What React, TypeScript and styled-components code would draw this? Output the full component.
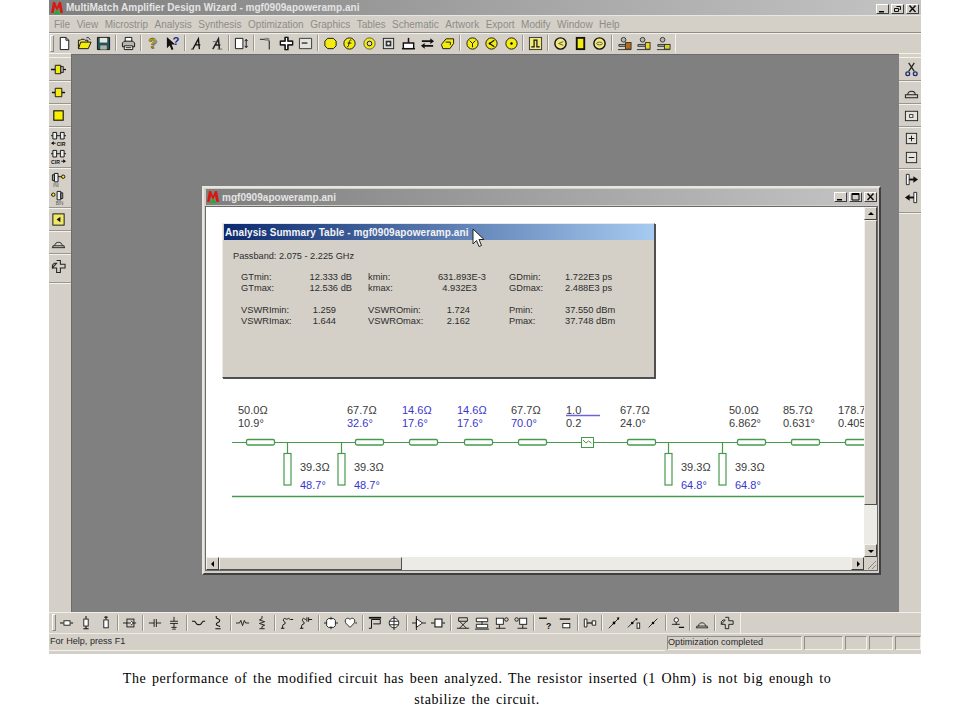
import React from "react";
import styled, { createGlobalStyle } from "styled-components";

const Global = createGlobalStyle`
  html, body { margin: 0; padding: 0; background: #fff; }
  #root { width: 960px; }
`;
const FACE = "#d4d0c8";
const SANS = `"Liberation Sans", Arial, sans-serif`;

const Page = styled.div`width: 960px; height: 720px; overflow: hidden; background: #fff;`;
const AppFrame = styled.div`width: 872px; margin-left: 49px; height: 654px; display: flex; flex-direction: column; background: ${FACE}; font-family: ${SANS};`;
const TitleBar = styled.div<{ $small?: boolean }>`
  display: flex; align-items: center; flex: none;
  height: ${(p) => (p.$small ? 16 : 15)}px;
  background: linear-gradient(90deg, #7f7f7f, #c4c4c4);
  color: #e4e4e4; font-weight: bold; font-size: 10px; letter-spacing: 0.03px;
  padding: 0 ${(p) => (p.$small ? 0 : 2)}px 0 ${(p) => (p.$small ? 0 : 1)}px;
`;
const TitleText = styled.span`flex: 1; margin-left: 2px; white-space: nowrap;`;
const CaptionButtons = styled.div<{ $drop?: boolean }>`display: flex; gap: 2px; margin-top: ${(p) => (p.$drop ? 2 : 0)}px;`;
const CaptionButton = styled.div`
  width: 13px; height: 10px; background: ${FACE}; box-sizing: border-box;
  border: 1px solid; border-color: #fff #404040 #404040 #fff;
  display: flex; align-items: center; justify-content: center;
`;
const MenuBar = styled.div`
  height: 18px; flex: none; display: flex; align-items: center; gap: 6.5px; padding: 1px 0 0 5px; font-size: 10px; color: #8e8c86;
  border-bottom: 1px solid #8f8d88; box-sizing: border-box; box-shadow: inset 0 1px 0 #e8e6e0;
`;
const Toolbar = styled.div<{ $pad: number; $height: number; $end: number }>`
  height: ${(p) => p.$height}px; flex: none; display: flex; align-items: center; padding-left: ${(p) => p.$pad}px; box-sizing: border-box;
  position: relative;
  box-shadow: inset 0 1px 0 #f2f0ea;
  &::after { content: ""; display: block; width: 1px; height: 100%; background: #f2f0ea; margin-left: ${(p) => p.$end}px; }
`;
const Grip = styled.div`width: 2px; height: 15px; border: 1px solid; border-color: #fff #8a8880 #8a8880 #fff; margin-left: -4px; margin-right: 1px;`;
const Btn = styled.div`width: 19.5px; height: 16px; flex: none; display: flex; align-items: center; justify-content: center;`;
const Sep = styled.div<{ $w: number }>`
  width: ${(p) => p.$w}px; height: 16px; flex: none; position: relative;
  &::before { content: ""; position: absolute; left: calc(50% - 1px); top: 0; bottom: 0; width: 1px; background: #98968f; box-shadow: 1px 0 0 #f4f2ec; }
`;
const Middle = styled.div`flex: none; height: 559px; display: flex;`;
const SideBar = styled.div<{ $w: number }>`
  width: ${(p) => p.$w}px; flex: none; display: flex; flex-direction: column; align-items: center; box-sizing: border-box;
`;
const SideGrip = styled.div`width: 100%; height: 3px; flex: none; border-top: 1px solid #f4f2ec; border-bottom: 1px solid #f4f2ec; margin-bottom: 1px;`;
const SideBtn = styled.div<{ $h: number; $nudge: number }>`height: ${(p) => p.$h}px; flex: none; display: flex; align-items: center; justify-content: center; margin-left: ${(p) => p.$nudge}px;`;
const SideSep = styled.div<{ $h: number }>`
  height: ${(p) => p.$h}px; width: 100%; flex: none; display: flex; align-items: center;
  &::before { content: ""; display: block; width: 100%; height: 1px; background: #98968f; box-shadow: 0 1px 0 #f4f2ec; }
`;
const Mdi = styled.div`flex: 1; position: relative; background: #808080; margin-top: 1px; box-shadow: inset 1px 1px 0 #6c6c6c;`;
const ChildWindow = styled.div`
  position: absolute; left: 131px; top: 132px; width: 679px; height: 389px; box-sizing: border-box;
  background: ${FACE}; border: 2px solid; border-color: #e8e6e0 #404040 #404040 #e8e6e0; padding: 1px 2px 2px 2px;
  display: flex; flex-direction: column;
`;
const ClientGrid = styled.div`
  margin-top: 2px; display: grid; grid-template-columns: 658px 13px; grid-template-rows: 350px 13px; background: ${FACE};
  box-shadow: 0 0 0 1px #6a6a6a;
`;
const Client = styled.div`position: relative; background: #fff; overflow: hidden;`;
const Scroll = styled.div<{ $vertical?: boolean }>`display: flex; flex-direction: ${(p) => (p.$vertical ? "column" : "row")}; background: #ecebe6;`;
const ScrollButton = styled.div`
  width: 13px; height: 13px; flex: none; background: ${FACE}; box-sizing: border-box; border: 1px solid; border-color: #f4f2ec #404040 #404040 #f4f2ec;
  display: flex; align-items: center; justify-content: center;
`;
const Thumb = styled.div<{ $size: number; $vertical?: boolean }>`
  flex: none; background: ${FACE}; box-sizing: border-box; border: 1px solid; border-color: #f4f2ec #505050 #505050 #f4f2ec;
  ${(p) => (p.$vertical ? `height: ${p.$size}px;` : `width: ${p.$size}px;`)}
`;
const Track = styled.div`flex: 1;`;
const Corner = styled.div`background: ${FACE}; display: flex; align-items: flex-end; justify-content: flex-end;`;

const Dialog = styled.div`
  position: absolute; left: 16px; top: 16px; width: 433px; height: 155px; box-sizing: border-box;
  background: ${FACE}; border: 1px solid; border-color: #ece9e4 #505050 #505050 #ece9e4; box-shadow: 1px 1px 0 #505050;
  color: #2c2c2c; font-size: 9px;
`;
const DialogTitle = styled.div`
  height: 16px; margin-left: 1px; display: flex; align-items: center; padding-left: 1px;
  background: linear-gradient(90deg, #0c2a70, #a6caf0); color: #f4f4f4; font-size: 10px; font-weight: bold; letter-spacing: 0.08px; white-space: nowrap;
`;
const Passband = styled.div`margin: 11px 0 0 10px; font-size: 9.2px; line-height: 11px;`;
const Table = styled.div`
  margin: 10px 0 0 18px; display: grid; font-size: 9.3px; line-height: 11px;
  grid-template-columns: 59px 52px 16px 62px 56px 23px 56px 47px;
  grid-auto-rows: 11px; white-space: nowrap;
`;
const Spacer = styled.div`grid-column: 1 / -1; height: 11px;`;
const Cell = styled.div``;
const Gap = styled.div``;
const Value = styled.div<{ $pad: number }>`text-align: right; padding-right: ${(p) => p.$pad}px;`;
const PointerMark = styled.svg`position: absolute; left: 266px; top: 21px;`;

const Schematic = styled.svg`display: block; position: absolute; left: 0; top: 0; font-family: ${SANS}; font-size: 11px;`;

const StatusBar = styled.div`
  height: 21px; flex: none; display: flex; align-items: flex-start; box-sizing: border-box; border-top: 1px solid #eeece6; padding-top: 2px; font-size: 9.1px; color: #2a2a2a;
`;
const StatusMain = styled.div`flex: 1; padding: 0 0 0 1px; height: 14px; border-bottom: 1px solid #f4f2ec;`;
const StatusPanel = styled.div<{ $w: number }>`
  width: ${(p) => p.$w}px; height: 14px; flex: none; margin-left: 2px; box-sizing: border-box; white-space: nowrap;
  border: 1px solid; border-color: #8f8d88 #f4f2ec #f4f2ec #8f8d88;
`;
const Caption = styled.p`
  width: 760px; margin: 14px 0 0 97px; font-family: "Liberation Serif", "Times New Roman", serif; font-size: 14px; line-height: 21px; text-align: center; letter-spacing: 0.56px; word-spacing: 1.66px; color: #000;
`;
const Glyph = styled.svg`display: block; overflow: visible;`;

const Y = "#f4ec10", K = "#111", G = "#8a8a80", W = "#fff";
const S = ({ d, c = K, w = 1 }: { d: string; c?: string; w?: number }) => <path d={d} fill="none" stroke={c} strokeWidth={w} />;
const F = ({ d, f = W, c = K }: { d: string; f?: string; c?: string }) => <path d={d} fill={f} stroke={c} />;
const Ic = ({ size = 16, children }: { size?: number; children: React.ReactNode }) => <Glyph width={size} height={size} viewBox="0 0 16 16">{children}</Glyph>;

const ICONS: Record<string, React.ReactNode> = {
  new: <><F d="M3.5 1.5h6l3 3v10h-9z" /><S d="M9.5 1.5v3h3" /></>,
  open: <><F d="M1.5 13.5v-9h2l1-1h3l1 1h3v2" f="#e8d870" /><F d="M1.5 13.5l2.5-7h11l-3 7z" f={Y} /><S d="M10 2c2-1 3 0 4 2" /></>,
  save: <><F d="M1.5 1.5h13v13h-13z" f="#23555a" /><rect x="4" y="2" width="8" height="5" fill="#e8e8e0" /><rect x="4.5" y="10" width="7" height="4.5" fill="#b0b0a8" /></>,
  print: <><F d="M4.5 1.5h7v5h-7z" /><F d="M1.5 7.5l2-2h9l2 2v4h-13z" f="#b8b6ae" /><F d="M3.5 10.5h9v4h-9z" /><S d="M5 12.5h6" /></>,
  help: <><text x="3.5" y="13.5" fontFamily={SANS} fontWeight="bold" fontSize="15" fill="#8a8a80">?</text><text x="2.5" y="12.5" fontFamily={SANS} fontWeight="bold" fontSize="15" fill="#c0b010" stroke={K} strokeWidth=".3">?</text></>,
  what: <><path d="M2 1v12l3-3 2 5 2-1-2-5h4z" fill={K} /><text x="8" y="9.5" fontFamily={SANS} fontWeight="bold" fontSize="12" fill="#1a2a90">?</text></>,
  a1: <><S d="M3 14L9 3l1 11M5.5 9.500h5.500" w={1.4} /><S d="M1 14h3" c="#444" /></>,
  a2: <><S d="M3 14L9 3l1 11M5.5 9.500h5.500" w={1.6} c="#222" /><S d="M8 14h5M3 6h4" c="#666" /></>,
  boxar: <><F d="M1.5 2.5h8v11h-8z" /><S d="M13 4v8M11.5 5.5L13 3.5l1.5 2M11.5 10.5l1.5 2 1.5-2" /></>,
  tee: <><S d="M1 3.5h8l2 2v9" c="#444" w={1.4} /><path d="M6 2h5v3H6z" fill={G} /></>,
  cross: <><F d="M6.5 1.5h3v4h5v4h-5v5h-3v-5h-5v-4h5z" f={W} /><S d="M6.5 1.5h3v4h5v4h-5v5h-3v-5h-5v-4h5z" w={1.4} /></>,
  rectb: <><F d="M1.5 2.5h13v11h-13z" f="#e4e2dc" c="#333" /><S d="M4 7.5h6" c="#333" w={1.5} /></>,
  oct: <path d="M5 2.5h6l3 3v5l-3 3H5l-3-3v-5z" fill={Y} stroke={K} />,
  circf: <><circle cx="8" cy="8" r="6" fill={Y} stroke={K} /><S d="M10 4.5c-2-1-2 1-2.5 3S7 12 5.5 11.5M6 7.5h4" /></>,
  ring: <><circle cx="8" cy="8" r="6" fill={Y} stroke="#555" /><circle cx="8" cy="8" r="2.5" fill="#e0d8a0" stroke={K} /></>,
  dots: <><rect x="2.5" y="2.5" width="11" height="11" fill="#ddd" stroke="#222" /><rect x="5" y="5" width="6" height="6" fill="#333" /><circle cx="8" cy="8" r="1.4" fill={W} /></>,
  capb: <><S d="M8 2v5" w={1.6} /><path d="M2.5 7.5h11v6h-11z" fill={W} stroke={K} strokeWidth="1.5" /><S d="M1 13.5h14" w={1.5} /></>,
  swap: <><S d="M2 5.5h11M3 10.5h11" w={2} /><path d="M11 2.5l4 3-4 3zM5 7.5l-4 3 4 3z" fill={K} /></>,
  blob: <><path d="M1.5 9l5-6h8v5l-4 5.5H3z" fill={Y} stroke={K} /><S d="M6 6.5h5v3" /></>,
  cy: <><circle cx="8" cy="8" r="6" fill={Y} stroke={K} /><S d="M5 5l3 3 3-3M8 8v4" /></>,
  cl: <><circle cx="8" cy="8" r="6" fill={Y} stroke={K} /><S d="M11 4.5L6 8l5 3.5" w={1.3} /><circle cx="6" cy="8" r="1" /></>,
  cd: <><circle cx="8" cy="8" r="6" fill={Y} stroke={K} /><circle cx="8" cy="8" r="1.3" /></>,
  pulse: <><rect x="1.5" y="1.5" width="13" height="13" fill="#f0e878" stroke="#333" /><S d="M3.5 11.5h3v-7h3v7h3" w={1.3} /></>,
  co: <><circle cx="8" cy="8" r="6" fill="#f0e878" stroke={K} strokeWidth="1.5" /><S d="M11 6L6 8l5 2" c="#555" /></>,
  sq: <rect x="4" y="2" width="8" height="12" fill={Y} stroke={K} strokeWidth="2" />,
  ov: <><circle cx="8" cy="8" r="6" fill="#f0e878" stroke={K} strokeWidth="1.5" /><ellipse cx="8" cy="8" rx="3" ry="1.5" fill="none" stroke="#555" /></>,
  lock1: <><circle cx="7" cy="4" r="2.5" fill="#b8b6ae" stroke="#333" /><path d="M2 9h9v2H2zM1 14.5h14" fill="#a8a89c" stroke="#333" /><rect x="9" y="7" width="6" height="7" fill="#b86a18" stroke="#333" /></>,
  lock2: <><circle cx="7" cy="4" r="2.5" fill="#b8b6ae" stroke="#333" /><path d="M2 9h9v2H2zM1 14.5h14" fill="#a8a89c" stroke="#333" /><rect x="10" y="7" width="5" height="7" fill="#e8d820" stroke="#333" /></>,
  lock3: <><circle cx="7" cy="4" r="2.5" fill="#b8b6ae" stroke="#333" /><path d="M2 9h9v2H2zM1 14.5h14" fill="#a8a89c" stroke="#333" /><rect x="9" y="9" width="6" height="5" fill="#d8d020" stroke="#333" /></>,

  l1: <><S d="M0 8h5" w={1.6} /><path d="M4.5 3.5h6v9h-6z" fill={Y} stroke={K} /><rect x="10.5" y="5" width="2.5" height="6" fill="#d8d8c8" stroke={K} /><S d="M13 8h3" w={1.4} /></>,
  l2: <><S d="M1 8h3.5M11.5 8h3.5" w={1.6} /><path d="M4.5 3.5h7v9h-7z" fill={Y} stroke={K} /></>,
  l3: <rect x="3" y="3" width="10" height="10" fill="#f8f000" stroke={K} strokeWidth="1.2" />,
  cir1: <><path d="M2 1.5h4v7H2zM10 1.5h4v7h-4z" fill="#eee" stroke={K} /><S d="M6 5h4M0 5h2M14 5h2" /><path d="M0 13l3-2v4z" /><S d="M3 13h2" /><text x="6" y="15.5" fontFamily={SANS} fontWeight="bold" fontSize="5.5" fill={K}>CIR</text></>,
  cir2: <><path d="M2 1.5h4v7H2zM10 1.5h4v7h-4z" fill="#eee" stroke={K} /><S d="M6 5h4M0 5h2M14 5h2" /><path d="M16 13l-3-2v4z" /><S d="M13 13h-2" /><text x="0" y="15.5" fontFamily={SANS} fontWeight="bold" fontSize="5.5" fill={K}>CIR</text></>,
  in1: <><path d="M3.5 1.5h4v9h-4zM1.5 3h2v6h-2z" fill="#eee" stroke={K} /><S d="M7.5 5h4" /><circle cx="13" cy="5" r="1.8" fill={Y} stroke={K} /><text x="2" y="15.5" fontFamily={SANS} fontSize="5" fill="#555">INI</text></>,
  in2: <><S d="M0 5h3" /><circle cx="2.5" cy="5" r="1.8" fill={Y} stroke={K} /><path d="M6.5 1.5h4v9h-4zM10.5 3h2v6h-2z" fill="#eee" stroke={K} /><text x="5" y="15.5" fontFamily={SANS} fontSize="5" fill="#555">BIN</text></>,
  boxs: <><rect x="2" y="2" width="12" height="12" fill="#f0e868" stroke={K} /><path d="M6 8l4-3v6z" fill={K} /></>,
  hat: <><S d="M1 13.5h14M2 13.5v-2h12v2M4 11.5c0-5 8-5 8 0" c="#222" /></>,
  plus2: <><S d="M6 1.5h4v4h5v4h-5v5H6v-5H1.5M1.5 9.5v-3l2-2H6z" c="#222" w={1.1} /></>,

  scis: <><S d="M5 1l6 9M11 1l-6 9" c="#222" w={1.3} /><circle cx="4" cy="12.5" r="2" fill="none" stroke="#1a2a70" strokeWidth="1.4" /><circle cx="12" cy="12.5" r="2" fill="none" stroke="#1a2a70" strokeWidth="1.4" /></>,
  hat2: <><S d="M1 13.5h14M1.5 13.5v-3h13v3M4 10.5c0-5 8-5 8 0" c="#222" w={1.1} /></>,
  boxdot: <><rect x="1.5" y="3.5" width="13" height="10" fill="#e4e2dc" stroke="#222" /><rect x="6" y="7" width="3.5" height="3" fill={W} stroke="#333" /></>,
  plusb: <><rect x="2.5" y="2.5" width="11" height="11" fill="#e4e2dc" stroke="#222" /><S d="M5 8h6M8 5v6" /></>,
  minusb: <><rect x="2.5" y="2.5" width="11" height="11" fill="#e4e2dc" stroke="#222" /><S d="M5 8h6" /></>,
  barR: <><path d="M2.5 2.5h3v11h-3z" fill={W} stroke="#222" /><S d="M5.5 8H12" w={2} /><path d="M10 4.5l5 3.5-5 3.5z" fill={K} /></>,
  barL: <><path d="M10.5 2.5h3v11h-3z" fill={W} stroke="#222" /><S d="M10.5 8H4" w={2} /><path d="M6 4.5L1 8l5 3.5z" fill={K} /></>,

  b1: <><S d="M0 8h4M12 8h3" w={1.4} /><rect x="4.5" y="5.5" width="7" height="5" fill={W} stroke={K} /></>,
  b2: <><S d="M8 0v3M8 11v3M5 14.5h6" w={1.2} /><rect x="5.5" y="3.5" width="5" height="8" fill={W} stroke={K} /></>,
  b3: <><S d="M8 0v4M6 1.5h4" w={1.2} /><rect x="5.5" y="4.5" width="5" height="9" fill={W} stroke={K} /></>,
  b4: <><rect x="4.5" y="3.5" width="8" height="9" fill="none" stroke={K} /><S d="M0 8h15" /><path d="M9 5.5l3 2.5-3 2.5" fill={W} stroke={K} /></>,
  b5: <S d="M1 8h6M7 3.5v9M9.5 3.5v9M9.5 8H15" />,
  b6: <S d="M8 1v5M3.5 6h9M3.5 8.5h9M8 8.5V13M5 13h6M6 15h4" />,
  b7: <S d="M0 6h3c1 0 1 4 5 4s3-4 5-4h2" w={1.2} />,
  b8: <S d="M6 0v2c0 1 4 1 4 3.5S6 7 6 9.5s4 1 4 3M5 14.5h6" w={1.2} />,
  b9: <S d="M0 8h4l1.5-3 2 6 2-6 1.5 3h4" />,
  b10: <S d="M8 0v3L5 4.5l6 2-6 2 6 2-3 1.5v2M5 14.5h6" />,
  b11: <S d="M1 14h4M3 14v-3c0-2 3-1 3-3s-3-1-2-4 3 1 5-1c1-1 2 1 3 1h3" w={1.1} />,
  b12: <S d="M1 14h4M3 14v-3c0-2 3-1 3-3s-3-1-2-4 2 0 4 0M9 1.5v5M11 1.5v5M11 4h4" w={1.1} />,
  b13: <><path d="M5 3h6l2 2v6l-2 2H5l-2-2V5z" fill={W} stroke={K} /><S d="M0 8h3M13 8h3M8 1v3M8 12v3" /></>,
  b14: <><path d="M4 3c2-1 3 0 4 1 1-1 2-2 4-1s2 4 0 6l-4 4-4-4C2 7 2 4 4 3z" fill={W} stroke={K} /><S d="M14 8h2" /></>,
  b15: <><S d="M1 2h14" w={2} /><S d="M4 14V4h10v5H6M4 14H1" w={1.1} /></>,
  b16: <><circle cx="8" cy="8" r="5.5" fill={W} stroke={K} /><S d="M3 6h10M3 10h10M8 0v16" /></>,
  b17: <><path d="M5 3l7 5-7 5z" fill={W} stroke={K} /><S d="M0 8h5M12 8h4M5 0v16" /></>,
  b18: <><rect x="4.5" y="3.5" width="8" height="9" fill={W} stroke={K} strokeWidth="1.2" /><S d="M0 8h4M13 8h3" w={1.4} /></>,
  b19: <><path d="M3 2h10v4H3zM1 14h14M4 6l8 8M12 6l-8 8" fill="none" stroke={K} /></>,
  b20: <><path d="M1.5 2.5h13v4h-13zM1.5 9.5h13v4h-13z" fill={W} stroke={K} /><S d="M8 6v4M0 15h16" /></>,
  b21: <><rect x="1.5" y="2.5" width="8" height="7" fill={W} stroke={K} /><circle cx="13" cy="4" r="2" fill="none" stroke={K} /><S d="M1 14h11M5 10v4" /></>,
  b22: <><circle cx="3" cy="4" r="2" fill="none" stroke={K} /><rect x="6.5" y="2.5" width="8" height="7" fill={W} stroke={K} /><S d="M4 14h11M10 10v4" /></>,
  b23: <><S d="M0 2.5h9" w={1.6} /><text x="8" y="14.5" fontFamily={SANS} fontWeight="bold" fontSize="10" fill={K}>?</text></>,
  b24: <><S d="M2 3.5h12" w={1.6} /><rect x="5.5" y="8.5" width="8" height="5" fill={W} stroke={K} /></>,
  b25: <><path d="M1.5 3.5h3v9h-3zM10.5 5.5h4v5h-4z" fill={W} stroke={K} /><S d="M4.5 8h6" w={1.4} /></>,
  b26: <><S d="M2 14L13 3" /><circle cx="8" cy="8" r="1.6" /><path d="M11 2l3-.5-.5 3z" /></>,
  b27: <><S d="M1 13L10 4" /><circle cx="6" cy="8" r="1.5" /><path d="M9 3l3-.5-.5 3z" /><rect x="11.5" y="8" width="3" height="6" fill={W} stroke={K} /></>,
  b28: <><S d="M3 13L13 3" /><circle cx="8" cy="8" r="1.5" /></>,
  b29: <><circle cx="6" cy="4.5" r="2.5" fill={W} stroke={K} /><S d="M1 9.5h9" /><S d="M9 13h6" w={1.5} /><S d="M6 7v3" /></>,
};

const TOP = [["new", "open", "save"], ["print"], ["help", "what"], ["a1", "a2"], ["boxar"], ["tee", "cross", "rectb"], ["oct", "circf", "ring", "dots", "capb", "swap", "blob"], ["cy", "cl", "cd"], ["pulse"], ["co", "sq", "ov"], ["lock1", "lock2", "lock3"]];
const BOTTOM = [["b1", "b2", "b3"], ["b4"], ["b5", "b6"], ["b7", "b8"], ["b9", "b10"], ["b11", "b12"], ["b13", "b14"], ["b15", "b16"], ["b17", "b18"], ["b19", "b20", "b21", "b22"], ["b23", "b24"], ["b25"], ["b26", "b27", "b28"], ["b29"], ["hat"], ["plus2"]];
type SideItem = { i?: string; h: number };
const LEFT: SideItem[] = [{ i: "l1", h: 20 }, { h: 3 }, { i: "l2", h: 20 }, { h: 3 }, { i: "l3", h: 20 }, { h: 3 }, { i: "cir1", h: 20 }, { i: "cir2", h: 17 }, { h: 5 }, { i: "in1", h: 18 }, { i: "in2", h: 18 }, { h: 3 }, { i: "boxs", h: 20 }, { h: 3 }, { i: "hat", h: 20 }, { h: 3 }, { i: "plus2", h: 22 }, { h: 10 }];
const RIGHT: SideItem[] = [{ i: "scis", h: 20 }, { h: 3 }, { i: "hat2", h: 20 }, { h: 3 }, { i: "boxdot", h: 20 }, { h: 3 }, { i: "plusb", h: 20 }, { i: "minusb", h: 18 }, { h: 4 }, { i: "barR", h: 18 }, { i: "barL", h: 18 }, { h: 12 }];

const MENUS = ["File", "View", "Microstrip", "Analysis", "Synthesis", "Optimization", "Graphics", "Tables", "Schematic", "Artwork", "Export", "Modify", "Window", "Help"];

const Logo = () => (
  <Glyph width="14" height="14" viewBox="0 0 14 14">
    <path d="M1 12L3 1h2l2 5 2-5h2l2 11h-2.5L9 6l-2 4-2-4-1.500 6z" fill="#d81810" />
    <path d="M3 13l4-4 4 4z" fill="#20b030" />
  </Glyph>
);

const CapGlyph = ({ kind }: { kind: string }) => (
  <Glyph width="9" height="8" viewBox="0 0 9 8">
    {kind === "min" && <path d="M1 6h5v1.500H1z" fill="#000" />}
    {kind === "res" && <S d="M3.500 1.500h4v3h-1M1.500 3.500h4v3h-4z" />}
    {kind === "max" && <path d="M1 .5h7v6.500H1zM1 1.500h7" fill="none" stroke="#000" />}
    {kind === "x" && <S d="M1.500 .5l6 6.500M7.500 .5l-6 6.500" w={1.5} />}
  </Glyph>
);
const Tri = ({ dir }: { dir: "u" | "d" | "l" | "r" }) => {
  const d = { u: "M1 5l3-3 3 3z", d: "M1 3l3 3 3-3z", l: "M5 1L2 4l3 3z", r: "M3 1l3 3-3 3z" }[dir];
  return <Glyph width="8" height="8" viewBox="0 0 8 8"><path d={d} fill="#000" /></Glyph>;
};

const GREEN = "#469a4e", BLUE = "#3a36cc", INK = "#3a3a3a";
const Pair = ({ x, a, b, ca = INK, cb = INK }: { x: number; a: string; b: string; ca?: string; cb?: string }) => (
  <>
    <text x={x} y={414} fill={ca}>{a}</text>
    <text x={x} y={427} fill={cb}>{b}</text>
  </>
);
const Series = ({ x }: { x: number }) => <rect x={x + 0.5} y={439.5} width={28} height={5.500} rx={1.500} fill="#fff" stroke={GREEN} strokeWidth="1.300" />;
const Shunt = ({ x, z, deg }: { x: number; z: string; deg: string }) => (
  <>
    <path d={`M${x + 0.5} 442v11`} stroke={GREEN} strokeWidth="1.200" />
    <rect x={x - 3} y={453.500} width={7} height={31.500} fill="#fff" stroke={GREEN} strokeWidth="1.200" />
    <text x={x + 13} y={471} fill={INK}>{z}</text>
    <text x={x + 13} y={489} fill={BLUE}>{deg}</text>
  </>
);

export default function App() {
  const rows: [string, string, number, string, string, number, string, string, number][] = [
    ["GTmin:", "12.333 dB", 0, "kmin:", "631.893E-3", 0, "GDmin:", "1.722E3 ps", 0],
    ["GTmax:", "12.536 dB", 0, "kmax:", "4.932E3", 9, "GDmax:", "2.488E3 ps", 0],
    ["VSWRImin:", "1.259", 16, "VSWROmin:", "1.724", 16, "Pmin:", "37.550 dBm", 0],
    ["VSWRImax:", "1.644", 16, "VSWROmax:", "2.162", 16, "Pmax:", "37.748 dBm", 0],
  ];
  const renderRow = (r: (typeof rows)[number]) => (
    <React.Fragment key={r[0]}>
      <Cell>{r[0]}</Cell><Value $pad={r[2]}>{r[1]}</Value><Gap />
      <Cell>{r[3]}</Cell><Value $pad={r[5]}>{r[4]}</Value><Gap />
      <Cell>{r[6]}</Cell><Value $pad={r[8]}>{r[7]}</Value>
    </React.Fragment>
  );
  const bar = (groups: string[][], sep: number, size: number) =>
    groups.map((g, gi) => (
      <React.Fragment key={gi}>
        {gi > 0 && <Sep $w={sep} />}
        {g.map((n) => <Btn key={n}><Ic size={size}>{ICONS[n]}</Ic></Btn>)}
      </React.Fragment>
    ));
  const side = (items: SideItem[], nudge: number) =>
    items.map((it, idx) => it.i
      ? <SideBtn key={idx} $h={it.h} $nudge={nudge}><Ic size={15}>{ICONS[it.i]}</Ic></SideBtn>
      : <SideSep key={idx} $h={it.h} />);

  return (
    <Page>
      <Global />
      <AppFrame>
        <TitleBar>
          <Logo />
          <TitleText>MultiMatch Amplifier Design Wizard - mgf0909apoweramp.ani</TitleText>
          <CaptionButtons $drop>
            <CaptionButton><CapGlyph kind="min" /></CaptionButton>
            <CaptionButton><CapGlyph kind="res" /></CaptionButton>
            <CaptionButton><CapGlyph kind="x" /></CaptionButton>
          </CaptionButtons>
        </TitleBar>
        <MenuBar>{MENUS.map((m) => <span key={m}>{m}</span>)}</MenuBar>
        <Toolbar $pad={5} $height={20} $end={2}><Grip />{bar(TOP, 5.25, 15)}</Toolbar>
        <Middle>
          <SideBar $w={22}><SideGrip />{side(LEFT, -3)}</SideBar>
          <Mdi>
            <ChildWindow>
              <TitleBar $small>
                <Logo />
                <TitleText>mgf0909apoweramp.ani</TitleText>
                <CaptionButtons>
                  <CaptionButton><CapGlyph kind="min" /></CaptionButton>
                  <CaptionButton><CapGlyph kind="max" /></CaptionButton>
                  <CaptionButton><CapGlyph kind="x" /></CaptionButton>
                </CaptionButtons>
              </TitleBar>
              <ClientGrid>
                <Client>
                  <Schematic width="658" height="350" viewBox="206 207 658 350">
                    <path d="M232 442.500H864" stroke={GREEN} strokeWidth="1" />
                    <path d="M232 496.500H864" stroke={GREEN} strokeWidth="1.500" />
                    {[246, 355, 409, 464, 518, 627, 737, 791, 845].map((x) => <Series key={x} x={x} />)}
                    <rect x="581.500" y="437.500" width="12" height="10" fill="#fff" stroke={GREEN} />
                    <path d="M583 440l3 3 2.500-2 3 2" fill="none" stroke={GREEN} />
                    <path d="M566 415.500h34" stroke="#6a66d8" strokeWidth="1.500" />
                    <Shunt x={287} z="39.3Ω" deg="48.7°" />
                    <Shunt x={341} z="39.3Ω" deg="48.7°" />
                    <Shunt x={668} z="39.3Ω" deg="64.8°" />
                    <Shunt x={722} z="39.3Ω" deg="64.8°" />
                    <Pair x={238} a="50.0Ω" b="10.9°" />
                    <Pair x={347} a="67.7Ω" b="32.6°" cb={BLUE} />
                    <Pair x={402} a="14.6Ω" b="17.6°" ca={BLUE} cb={BLUE} />
                    <Pair x={457} a="14.6Ω" b="17.6°" ca={BLUE} cb={BLUE} />
                    <Pair x={511} a="67.7Ω" b="70.0°" cb={BLUE} />
                    <Pair x={566} a="1.0" b="0.2" />
                    <Pair x={620} a="67.7Ω" b="24.0°" />
                    <Pair x={729} a="50.0Ω" b="6.862°" />
                    <Pair x={783} a="85.7Ω" b="0.631°" />
                    <Pair x={838} a="178.7Ω" b="0.405°" />
                  </Schematic>
                  <Dialog>
                    <DialogTitle>Analysis Summary Table - mgf0909apoweramp.ani</DialogTitle>
                    <Passband>Passband: 2.075 - 2.225 GHz</Passband>
                    <Table>
                      {rows.slice(0, 2).map(renderRow)}
                      <Spacer />
                      {rows.slice(2).map(renderRow)}
                    </Table>
                  </Dialog>
                  <PointerMark width="14" height="20" viewBox="0 0 14 20">
                    <path d="M1 1v15l3.500-3.500 2.500 6 2.500-1-2.500-6h5z" fill="#fff" stroke="#222" />
                  </PointerMark>
                </Client>
                <Scroll $vertical>
                  <ScrollButton><Tri dir="u" /></ScrollButton>
                  <Thumb $vertical $size={285} />
                  <Track />
                  <ScrollButton><Tri dir="d" /></ScrollButton>
                </Scroll>
                <Scroll>
                  <ScrollButton><Tri dir="l" /></ScrollButton>
                  <Thumb $size={183} />
                  <Track />
                  <ScrollButton><Tri dir="r" /></ScrollButton>
                </Scroll>
                <Corner>
                  <Glyph width="12" height="12" viewBox="0 0 12 12">
                    <S d="M11 3l-8 8M11 7l-4 4M11 11" c="#8a8880" />
                  </Glyph>
                </Corner>
              </ClientGrid>
            </ChildWindow>
          </Mdi>
          <SideBar $w={22}><SideGrip />{side(RIGHT, 2)}</SideBar>
        </Middle>
        <Toolbar $pad={7} $height={21} $end={3}><Grip />{bar(BOTTOM, 5, 14)}</Toolbar>
        <StatusBar>
          <StatusMain>For Help, press F1</StatusMain>
          <StatusPanel $w={135}>Optimization completed</StatusPanel>
          <StatusPanel $w={39} />
          <StatusPanel $w={22} />
          <StatusPanel $w={24} />
          <StatusPanel $w={26} />
        </StatusBar>
      </AppFrame>
      <Caption>The performance of the modified circuit has been analyzed. The resistor inserted (1 Ohm) is not big enough to stabilize the circuit.</Caption>
    </Page>
  );
}
